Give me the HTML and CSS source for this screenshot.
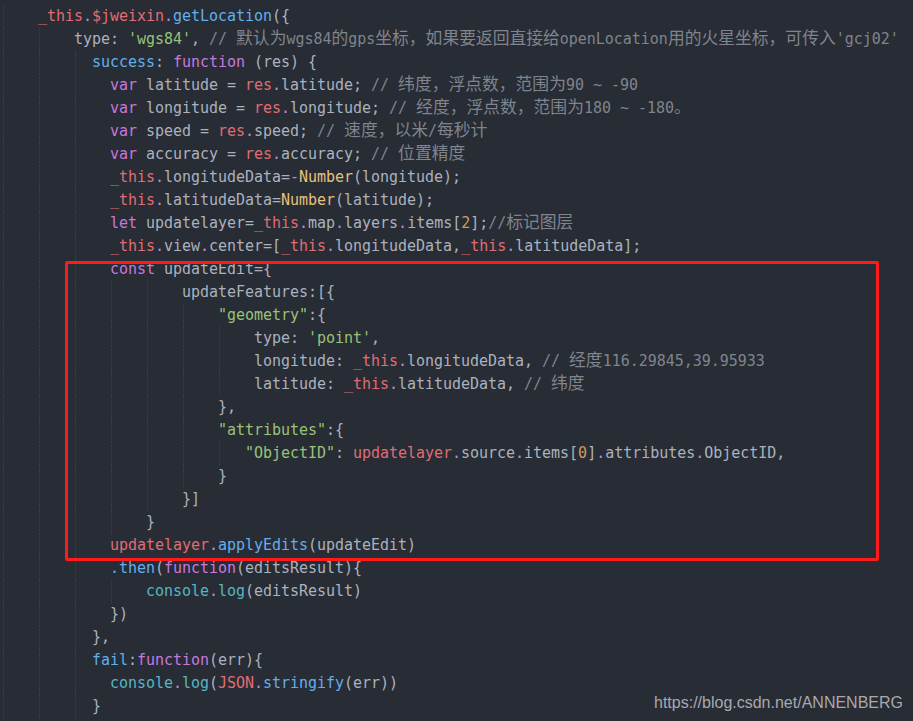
FILE: index.html
```html
<!DOCTYPE html>
<html lang="zh-CN">
<head>
<meta charset="utf-8">
<title>getLocation</title>
<link rel="stylesheet" href="styles.css">
</head>
<body>
<div class="editor">
  <div class="code">
    <div class="ln"><span class="i"></span><span class="c"><span class="r">_this</span><span class="d">.</span><span class="r">$jweixin</span><span class="d">.</span><span class="b">getLocation</span>({</span></div>
    <div class="ln"><span class="i"></span><span class="i"></span><span class="c">type: <span class="g">'wgs84'</span>, <span class="cm">// <span class="k">默认为</span>wgs84<span class="k">的</span>gps<span class="k">坐标，如果要返回直接给</span>openLocation<span class="k">用的火星坐标，可传入</span>'gcj02'</span></span></div>
    <div class="ln"><span class="i"></span><span class="i"></span><span class="i i2"></span><span class="c"><span class="b">success</span>: <span class="p">function</span> (res) {</span></div>
    <div class="ln"><span class="i"></span><span class="i"></span><span class="i"></span><span class="c"><span class="p">var</span> latitude = <span class="r">res</span><span class="d">.</span>latitude; <span class="cm">// <span class="k">纬度，浮点数，范围为</span>90 ~ -90</span></span></div>
    <div class="ln"><span class="i"></span><span class="i"></span><span class="i"></span><span class="c"><span class="p">var</span> longitude = <span class="r">res</span><span class="d">.</span>longitude; <span class="cm">// <span class="k">经度，浮点数，范围为</span>180 ~ -180<span class="k">。</span></span></span></div>
    <div class="ln"><span class="i"></span><span class="i"></span><span class="i"></span><span class="c"><span class="p">var</span> speed = <span class="r">res</span><span class="d">.</span>speed; <span class="cm">// <span class="k">速度，以米</span>/<span class="k">每秒计</span></span></span></div>
    <div class="ln"><span class="i"></span><span class="i"></span><span class="i"></span><span class="c"><span class="p">var</span> accuracy = <span class="r">res</span><span class="d">.</span>accuracy; <span class="cm">// <span class="k">位置精度</span></span></span></div>
    <div class="ln"><span class="i"></span><span class="i"></span><span class="i"></span><span class="c"><span class="r">_this</span><span class="d">.</span>longitudeData=<span class="p">-</span><span class="y">Number</span>(longitude);</span></div>
    <div class="ln"><span class="i"></span><span class="i"></span><span class="i"></span><span class="c"><span class="r">_this</span><span class="d">.</span>latitudeData=<span class="y">Number</span>(latitude);</span></div>
    <div class="ln"><span class="i"></span><span class="i"></span><span class="i"></span><span class="c"><span class="p">let</span> updatelayer=<span class="r">_this</span><span class="d">.</span>map<span class="d">.</span>layers<span class="d">.</span>items[<span class="o">2</span>];<span class="cm">//<span class="k">标记图层</span></span></span></div>
    <div class="ln"><span class="i"></span><span class="i"></span><span class="i"></span><span class="c"><span class="r">_this</span><span class="d">.</span>view<span class="d">.</span>center=[<span class="r">_this</span><span class="d">.</span>longitudeData,<span class="r">_this</span><span class="d">.</span>latitudeData];</span></div>
    <div class="ln"><span class="i"></span><span class="i"></span><span class="i"></span><span class="c"><span class="p">const</span> updateEdit={</span></div>
    <div class="ln"><span class="i"></span><span class="i"></span><span class="i"></span><span class="i"></span><span class="i"></span><span class="c">updateFeatures:[{</span></div>
    <div class="ln"><span class="i"></span><span class="i"></span><span class="i"></span><span class="i"></span><span class="i"></span><span class="i"></span><span class="c"><span class="g">"geometry"</span>:{</span></div>
    <div class="ln"><span class="i"></span><span class="i"></span><span class="i"></span><span class="i"></span><span class="i"></span><span class="i"></span><span class="i"></span><span class="c">type: <span class="g">'point'</span>,</span></div>
    <div class="ln"><span class="i"></span><span class="i"></span><span class="i"></span><span class="i"></span><span class="i"></span><span class="i"></span><span class="i"></span><span class="c">longitude: <span class="r">_this</span><span class="d">.</span>longitudeData, <span class="cm">// <span class="k">经度</span>116.29845,39.95933</span></span></div>
    <div class="ln"><span class="i"></span><span class="i"></span><span class="i"></span><span class="i"></span><span class="i"></span><span class="i"></span><span class="i"></span><span class="c">latitude: <span class="r">_this</span><span class="d">.</span>latitudeData, <span class="cm">// <span class="k">纬度</span></span></span></div>
    <div class="ln"><span class="i"></span><span class="i"></span><span class="i"></span><span class="i"></span><span class="i"></span><span class="i"></span><span class="c">},</span></div>
    <div class="ln"><span class="i"></span><span class="i"></span><span class="i"></span><span class="i"></span><span class="i"></span><span class="i"></span><span class="c"><span class="g">"attributes"</span>:{</span></div>
    <div class="ln"><span class="i"></span><span class="i"></span><span class="i"></span><span class="i"></span><span class="i"></span><span class="i"></span><span class="i i3"></span><span class="c"><span class="g">"ObjectID"</span>: <span class="r">updatelayer</span><span class="d">.</span>source<span class="d">.</span>items[<span class="o">0</span>]<span class="d">.</span>attributes<span class="d">.</span>ObjectID,</span></div>
    <div class="ln"><span class="i"></span><span class="i"></span><span class="i"></span><span class="i"></span><span class="i"></span><span class="i"></span><span class="c">}</span></div>
    <div class="ln"><span class="i"></span><span class="i"></span><span class="i"></span><span class="i"></span><span class="i"></span><span class="c">}]</span></div>
    <div class="ln"><span class="i"></span><span class="i"></span><span class="i"></span><span class="i"></span><span class="c">}</span></div>
    <div class="ln"><span class="i"></span><span class="i"></span><span class="i"></span><span class="c"><span class="r">updatelayer</span><span class="d">.</span><span class="b">applyEdits</span>(updateEdit)</span></div>
    <div class="ln"><span class="i"></span><span class="i"></span><span class="i"></span><span class="c"><span class="b">.then</span>(<span class="p">function</span>(editsResult){</span></div>
    <div class="ln"><span class="i"></span><span class="i"></span><span class="i"></span><span class="i"></span><span class="c"><span class="t">console</span><span class="d">.</span><span class="t">log</span>(editsResult)</span></div>
    <div class="ln"><span class="i"></span><span class="i"></span><span class="i"></span><span class="c">})</span></div>
    <div class="ln"><span class="i"></span><span class="i"></span><span class="i i2"></span><span class="c">},</span></div>
    <div class="ln"><span class="i"></span><span class="i"></span><span class="i i2"></span><span class="c"><span class="b">fail</span>:<span class="p">function</span>(err){</span></div>
    <div class="ln"><span class="i"></span><span class="i"></span><span class="i"></span><span class="c"><span class="t">console</span><span class="d">.</span><span class="t">log</span>(<span class="r">JSON</span><span class="d">.</span><span class="b">stringify</span>(err))</span></div>
    <div class="ln"><span class="i"></span><span class="i"></span><span class="i i2"></span><span class="c">}</span></div>
  </div>
  <div class="mark"></div>
  <div class="wm">https://blog.csdn.net/ANNENBERG</div>
</div>
</body>
</html>
```
FILE: styles.css
```css
html, body {
  margin: 0;
  padding: 0;
  background: #282c34;
}
body {
  width: 913px;
  height: 721px;
  overflow: hidden;
}
.editor {
  position: relative;
  width: 913px;
  height: 721px;
  background: #282c34;
}
.code {
  padding: 5px 0 0 2px;
  font-family: "DejaVu Sans Mono", "Liberation Mono", "Noto Sans CJK SC", monospace;
  font-size: 15px;
  letter-spacing: -0.03px;
  color: #abb2bf;
}
.ln {
  display: flex;
  align-items: stretch;
  height: 23px;
}
.i {
  flex: none;
  width: 36px;
  background-image: repeating-linear-gradient(to bottom, #3c414b 0 1px, transparent 1px 2px);
  background-size: 1px 100%;
  background-position: 1px 0;
  background-repeat: no-repeat;
}
.i2 { width: 18px; }
.i3 { width: 27px; }
.c {
  white-space: pre;
  line-height: 23px;
}
.k {
  font-family: "Noto Sans CJK SC", sans-serif;
  font-size: 16.8px;
  line-height: 1;
  letter-spacing: 0;
}
.r { color: #e06c75; }
.b { color: #61afef; }
.p { color: #c678dd; }
.d { color: #b98ad8; }
.g { color: #98c379; }
.o { color: #d19a66; }
.y { color: #e5c07b; }
.t { color: #56b6c2; }
.cm { color: #7f848e; }
.mark {
  position: absolute;
  left: 65px;
  top: 261px;
  width: 808px;
  height: 294px;
  border: 3px solid #ff1b1b;
  border-radius: 2px;
}
.wm {
  position: absolute;
  right: 10px;
  top: 694px;
  font-family: "Liberation Sans", Arial, sans-serif;
  font-size: 16px;
  line-height: 18px;
  color: #a7a9ad;
}
```
